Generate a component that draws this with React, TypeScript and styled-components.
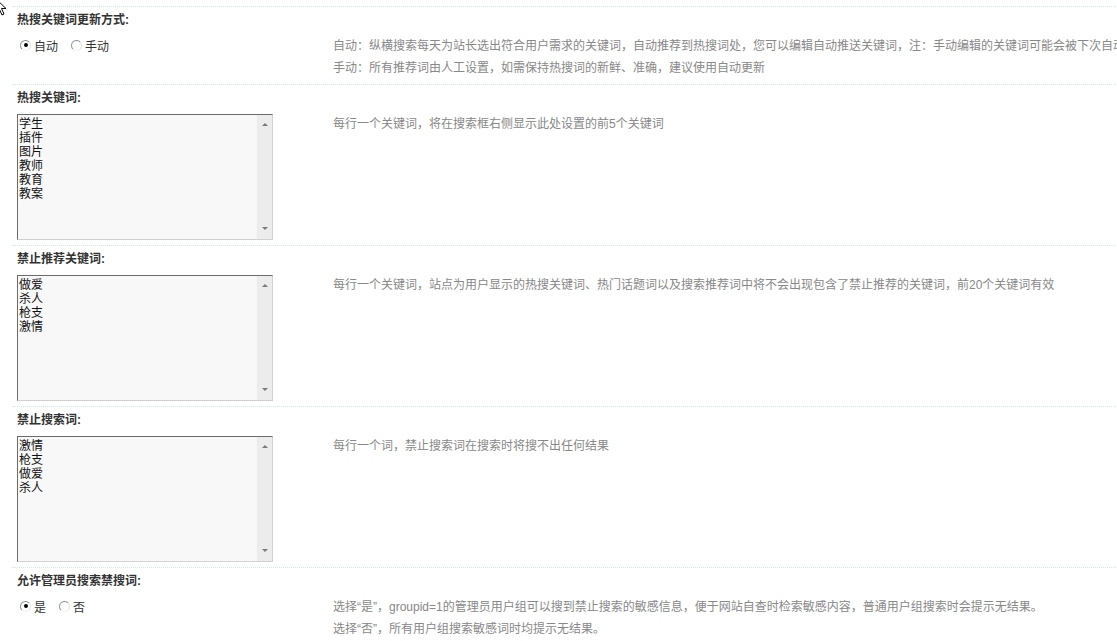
import React from 'react'
import styled, {createGlobalStyle} from 'styled-components'

const GlobalStyle = createGlobalStyle`
  html, body {
    margin: 0;
    padding: 0;
    overflow: hidden;
    background: #fff;
  }
  body {
    font: 12px "Liberation Sans", "Noto Sans CJK SC", sans-serif;
    color: #333;
  }
`

const Page = styled.div`
  position: relative;
  padding: 6px 0 0 12px;
`

const Table = styled.div`
  width: 1500px;
`

const LabelRow = styled.div`
  border-top: 1px dotted #cfe4f5;
  padding: 4px 5px 5px;
  line-height: 18px;
  font-weight: bold;
  color: #333;
`

const InputRow = styled.div`
  display: grid;
  grid-template-columns: 316px 1fr;
  padding: 0 5px 5px;
`

const InputCell = styled.div`
  padding-top: 2px;
`

const Desc = styled.div`
  padding-top: 1px;
  line-height: 22px;
  color: #888;
  white-space: nowrap;
`

const RadioGroup = styled.div`
  display: flex;
  align-items: center;
  height: 18px;
  padding-left: 3px;
`

const RadioLabel = styled.label`
  display: inline-flex;
  align-items: center;
  gap: 3px;
  margin-right: 13px;
  color: #333;
  cursor: default;
`

const RadioMark = styled.span<{checked?: boolean}>`
  width: 11px;
  height: 11px;
  box-sizing: border-box;
  border-radius: 50%;
  border: 1px solid;
  border-color: #7d8a99 #e2e2e2 #f2f2f2 #8c98a4;
  background: #fff;
  display: inline-flex;
  align-items: center;
  justify-content: center;

  &::after {
    content: '';
    width: 4px;
    height: 4px;
    border-radius: 50%;
    background: ${({checked}) => (checked ? '#000' : 'transparent')};
  }
`

const Field = styled.div`
  display: flex;
  width: 256px;
  height: 126px;
  box-sizing: border-box;
  border: 1px solid;
  border-color: #6b6b6b #d0d0d0 #d0d0d0 #6b6b6b;
  background: #f8f8f8;
`

const Area = styled.textarea`
  flex: 1;
  min-width: 0;
  border: none;
  outline: none;
  resize: none;
  overflow: hidden;
  background: transparent;
  padding: 1px 1px 0;
  margin: 0;
  font: 12px/14px "Noto Sans CJK SC", sans-serif;
  color: #111;
`

const ScrollTrack = styled.div`
  width: 16px;
  box-sizing: border-box;
  background: #ececec;
  border-left: 1px solid #f6f6f6;
  display: flex;
  flex-direction: column;
  align-items: center;
  justify-content: space-between;
  padding: 8px 0 9px;
`

const Arrow = styled.span<{down?: boolean}>`
  width: 0;
  height: 0;
  border-left: 3px solid transparent;
  border-right: 3px solid transparent;
  ${({down}) => (down ? 'border-top: 3px solid #7a7a7a;' : 'border-bottom: 3px solid #7a7a7a;')}
`

const Cursor = styled.svg`
  position: absolute;
  left: -5px;
  top: -2px;
`

type Radio = {label: string; checked?: boolean}

const Radios = ({items}: {items: Radio[]}) => (
  <RadioGroup>
    {items.map(r => (
      <RadioLabel key={r.label}>
        <RadioMark checked={r.checked} />
        {r.label}
      </RadioLabel>
    ))}
  </RadioGroup>
)

const WordBox = ({words}: {words: string[]}) => (
  <Field>
    <Area defaultValue={words.join('\n')} spellCheck={false} />
    <ScrollTrack>
      <Arrow />
      <Arrow down />
    </ScrollTrack>
  </Field>
)

const Setting = ({title, input, desc}: {title: string; input: React.ReactNode; desc: string[]}) => (
  <>
    <LabelRow>{title}</LabelRow>
    <InputRow>
      <InputCell>{input}</InputCell>
      <Desc>
        {desc.map(line => (
          <div key={line}>{line}</div>
        ))}
      </Desc>
    </InputRow>
  </>
)

export default function App() {
  return (
    <Page>
      <GlobalStyle />
      <Cursor width="14" height="20" viewBox="0 0 14 20">
        <path d="M1 1 L1 15 L4.5 11.5 L7 17 L9 16 L6.5 10.5 L11 10.5 Z" fill="#fff" stroke="#000" strokeWidth="1" />
      </Cursor>
      <Table>
        <Setting
          title="热搜关键词更新方式:"
          input={<Radios items={[{label: '自动', checked: true}, {label: '手动'}]} />}
          desc={[
            '自动：纵横搜索每天为站长选出符合用户需求的关键词，自动推荐到热搜词处，您可以编辑自动推送关键词，注：手动编辑的关键词可能会被下次自动推荐覆盖',
            '手动：所有推荐词由人工设置，如需保持热搜词的新鲜、准确，建议使用自动更新',
          ]}
        />
        <Setting
          title="热搜关键词:"
          input={<WordBox words={['学生', '插件', '图片', '教师', '教育', '教案']} />}
          desc={['每行一个关键词，将在搜索框右侧显示此处设置的前5个关键词']}
        />
        <Setting
          title="禁止推荐关键词:"
          input={<WordBox words={['做爱', '杀人', '枪支', '激情']} />}
          desc={['每行一个关键词，站点为用户显示的热搜关键词、热门话题词以及搜索推荐词中将不会出现包含了禁止推荐的关键词，前20个关键词有效']}
        />
        <Setting
          title="禁止搜索词:"
          input={<WordBox words={['激情', '枪支', '做爱', '杀人']} />}
          desc={['每行一个词，禁止搜索词在搜索时将搜不出任何结果']}
        />
        <Setting
          title="允许管理员搜索禁搜词:"
          input={<Radios items={[{label: '是', checked: true}, {label: '否'}]} />}
          desc={[
            '选择“是”，groupid=1的管理员用户组可以搜到禁止搜索的敏感信息，便于网站自查时检索敏感内容，普通用户组搜索时会提示无结果。',
            '选择“否”，所有用户组搜索敏感词时均提示无结果。',
          ]}
        />
      </Table>
    </Page>
  )
}
